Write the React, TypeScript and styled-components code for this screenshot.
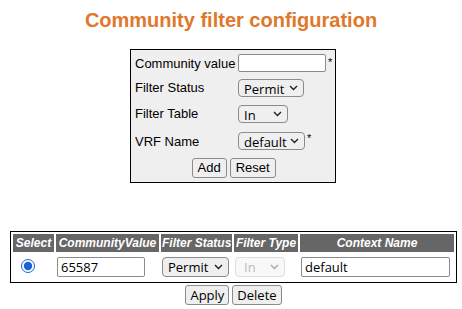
import React from "react";
import styled, { createGlobalStyle } from "styled-components";

const GlobalStyle = createGlobalStyle`
  html, body {
    margin: 0;
    padding: 0;
    background: #ffffff;
  }
  body {
    font-family: "Liberation Sans", Arial, sans-serif;
    font-size: 13px;
    color: #000000;
  }
`;

const Page = styled.div`
  width: 462px;
  height: 309px;
  display: flex;
  flex-direction: column;
  align-items: center;
  overflow: hidden;
`;

const Title = styled.h1`
  margin: 9px 0 0;
  font-size: 20px;
  line-height: 23px;
  font-weight: bold;
  color: #e0782a;
`;

const FormBox = styled.div`
  margin-top: 17px;
  margin-left: 4px;
  width: 206px;
  box-sizing: border-box;
  border: 1px solid #000000;
  background: #f0eff0;
  padding: 1px 4px 0 4px;
  display: grid;
  grid-template-columns: 103px auto;
  grid-template-rows: 24px 25px 27px 28px 27px;
`;

const Label = styled.div`
  align-self: center;
  line-height: 15px;
  white-space: nowrap;
`;

const Field = styled.div`
  display: flex;
  align-items: center;
  gap: 2px;
`;

const Required = styled.span`
  align-self: flex-start;
  margin-top: 6px;
  font-size: 11px;
  line-height: 11px;
`;

const TextInput = styled.input<{ $w: number; $h: number }>`
  width: ${(p) => p.$w}px;
  height: ${(p) => p.$h}px;
  box-sizing: border-box;
  margin: 0;
  padding: 0 0 0 3px;
  border: 1px solid #8b8b8b;
  border-radius: 2px;
  background: #ffffff;
  font-family: "Open Sans", "Noto Sans", sans-serif;
  font-size: 13px;
  color: #000000;
  outline: none;
`;

const SelectWrap = styled.span<{ $w: number }>`
  position: relative;
  display: inline-block;
  width: ${(p) => p.$w}px;
`;

const SelectBox = styled.select<{ $h: number }>`
  appearance: none;
  -webkit-appearance: none;
  display: block;
  width: 100%;
  height: ${(p) => p.$h}px;
  box-sizing: border-box;
  margin: 0;
  padding: 0 0 0 5px;
  border: 1px solid #8b8b8b;
  border-radius: 4px;
  background: #efefef;
  font-family: "Open Sans", "Noto Sans", sans-serif;
  font-size: 13px;
  color: #000000;
  outline: none;

  &:disabled {
    color: #a0a0a0;
    border-color: #d0d0d0;
    background: #f6f6f6;
    padding-left: 8px;
  }
`;

const Chevron = styled.svg`
  position: absolute;
  right: 6px;
  top: 50%;
  transform: translateY(-50%);
  pointer-events: none;
`;

const ButtonRow = styled.div`
  grid-column: 1 / -1;
  display: flex;
  justify-content: center;
  align-items: flex-start;
  gap: 3px;
  padding-top: 3px;
`;

const Button = styled.button<{ $sans?: boolean }>`
  height: 20px;
  box-sizing: border-box;
  margin: 0;
  padding: 0 ${(p) => (p.$sans ? 4 : 5)}px;
  border: 1px solid #8b8b8b;
  border-radius: 3px;
  background: #efefef;
  font-family: ${(p) =>
    p.$sans ? `"Open Sans", "Noto Sans", sans-serif` : `"Liberation Sans", Arial, sans-serif`};
  font-size: 13px;
  line-height: 18px;
  color: #000000;
`;

const ListTable = styled.table`
  margin-top: 48px;
  margin-left: 5px;
  width: 447px;
  table-layout: fixed;
  border: 1px solid #000000;
  border-collapse: separate;
  border-spacing: 2px;
`;

const HeadCell = styled.th<{ $w: number }>`
  width: ${(p) => p.$w}px;
  box-sizing: border-box;
  height: 18px;
  padding: 0 1px;
  background: #666666;
  color: #ffffff;
  font-size: 12px;
  font-weight: bold;
  font-style: italic;
  text-align: center;
  white-space: nowrap;
  overflow: hidden;
`;

const Cell = styled.td`
  height: 26px;
  padding: 0 1px;
  vertical-align: middle;
  white-space: nowrap;
`;

const Radio = styled.input`
  display: block;
  margin: 0 0 0 7px;
  width: 14px;
  height: 14px;
  position: relative;
  top: -1px;
  accent-color: #1764d4;
`;

const BottomButtons = styled.div`
  display: flex;
  justify-content: center;
  gap: 3px;
  margin-top: 2px;
  margin-left: 5px;
`;

type SelectProps = {
  width: number;
  height: number;
  value: string;
  options: string[];
  disabled?: boolean;
};

function Select(props: SelectProps) {
  const { width, height, value, options, disabled } = props;
  return (
    <SelectWrap $w={width}>
      <SelectBox $h={height} defaultValue={value} disabled={disabled}>
        {options.map((o) => (
          <option key={o}>{o}</option>
        ))}
      </SelectBox>
      <Chevron width="9" height="6" viewBox="0 0 9 6">
        <path
          d="M1 1 L4.5 4.5 L8 1"
          fill="none"
          stroke={disabled ? "#a8a8a8" : "#222222"}
          strokeWidth="1.4"
        />
      </Chevron>
    </SelectWrap>
  );
}

const columns = [
  { title: "Select", width: 41 },
  { title: "CommunityValue", width: 103 },
  { title: "Filter Status", width: 71 },
  { title: "Filter Type", width: 64 },
  { title: "Context Name", width: 154 },
];

export default function App() {
  return (
    <>
      <GlobalStyle />
      <Page>
        <Title>Community filter configuration</Title>

        <FormBox>
          <Label>Community value</Label>
          <Field>
            <TextInput $w={88} $h={18} defaultValue="" />
            <Required>*</Required>
          </Field>

          <Label>Filter Status</Label>
          <Field>
            <Select width={66} height={18} value="Permit" options={["Permit", "Deny"]} />
          </Field>

          <Label>Filter Table</Label>
          <Field>
            <Select width={50} height={18} value="In" options={["In", "Out"]} />
          </Field>

          <Label>VRF Name</Label>
          <Field>
            <Select width={67} height={18} value="default" options={["default"]} />
            <Required>*</Required>
          </Field>

          <ButtonRow>
            <Button>Add</Button>
            <Button>Reset</Button>
          </ButtonRow>
        </FormBox>

        <ListTable>
          <thead>
            <tr>
              {columns.map((c) => (
                <HeadCell key={c.title} $w={c.width}>
                  {c.title}
                </HeadCell>
              ))}
            </tr>
          </thead>
          <tbody>
            <tr>
              <Cell>
                <Radio type="radio" name="sel" defaultChecked />
              </Cell>
              <Cell>
                <TextInput $w={88} $h={20} defaultValue="65587" />
              </Cell>
              <Cell>
                <Select width={67} height={20} value="Permit" options={["Permit", "Deny"]} />
              </Cell>
              <Cell>
                <Select width={50} height={20} value="In" options={["In", "Out"]} disabled />
              </Cell>
              <Cell>
                <TextInput $w={149} $h={20} defaultValue="default" />
              </Cell>
            </tr>
          </tbody>
        </ListTable>

        <BottomButtons>
          <Button $sans>Apply</Button>
          <Button $sans>Delete</Button>
        </BottomButtons>
      </Page>
    </>
  );
}
